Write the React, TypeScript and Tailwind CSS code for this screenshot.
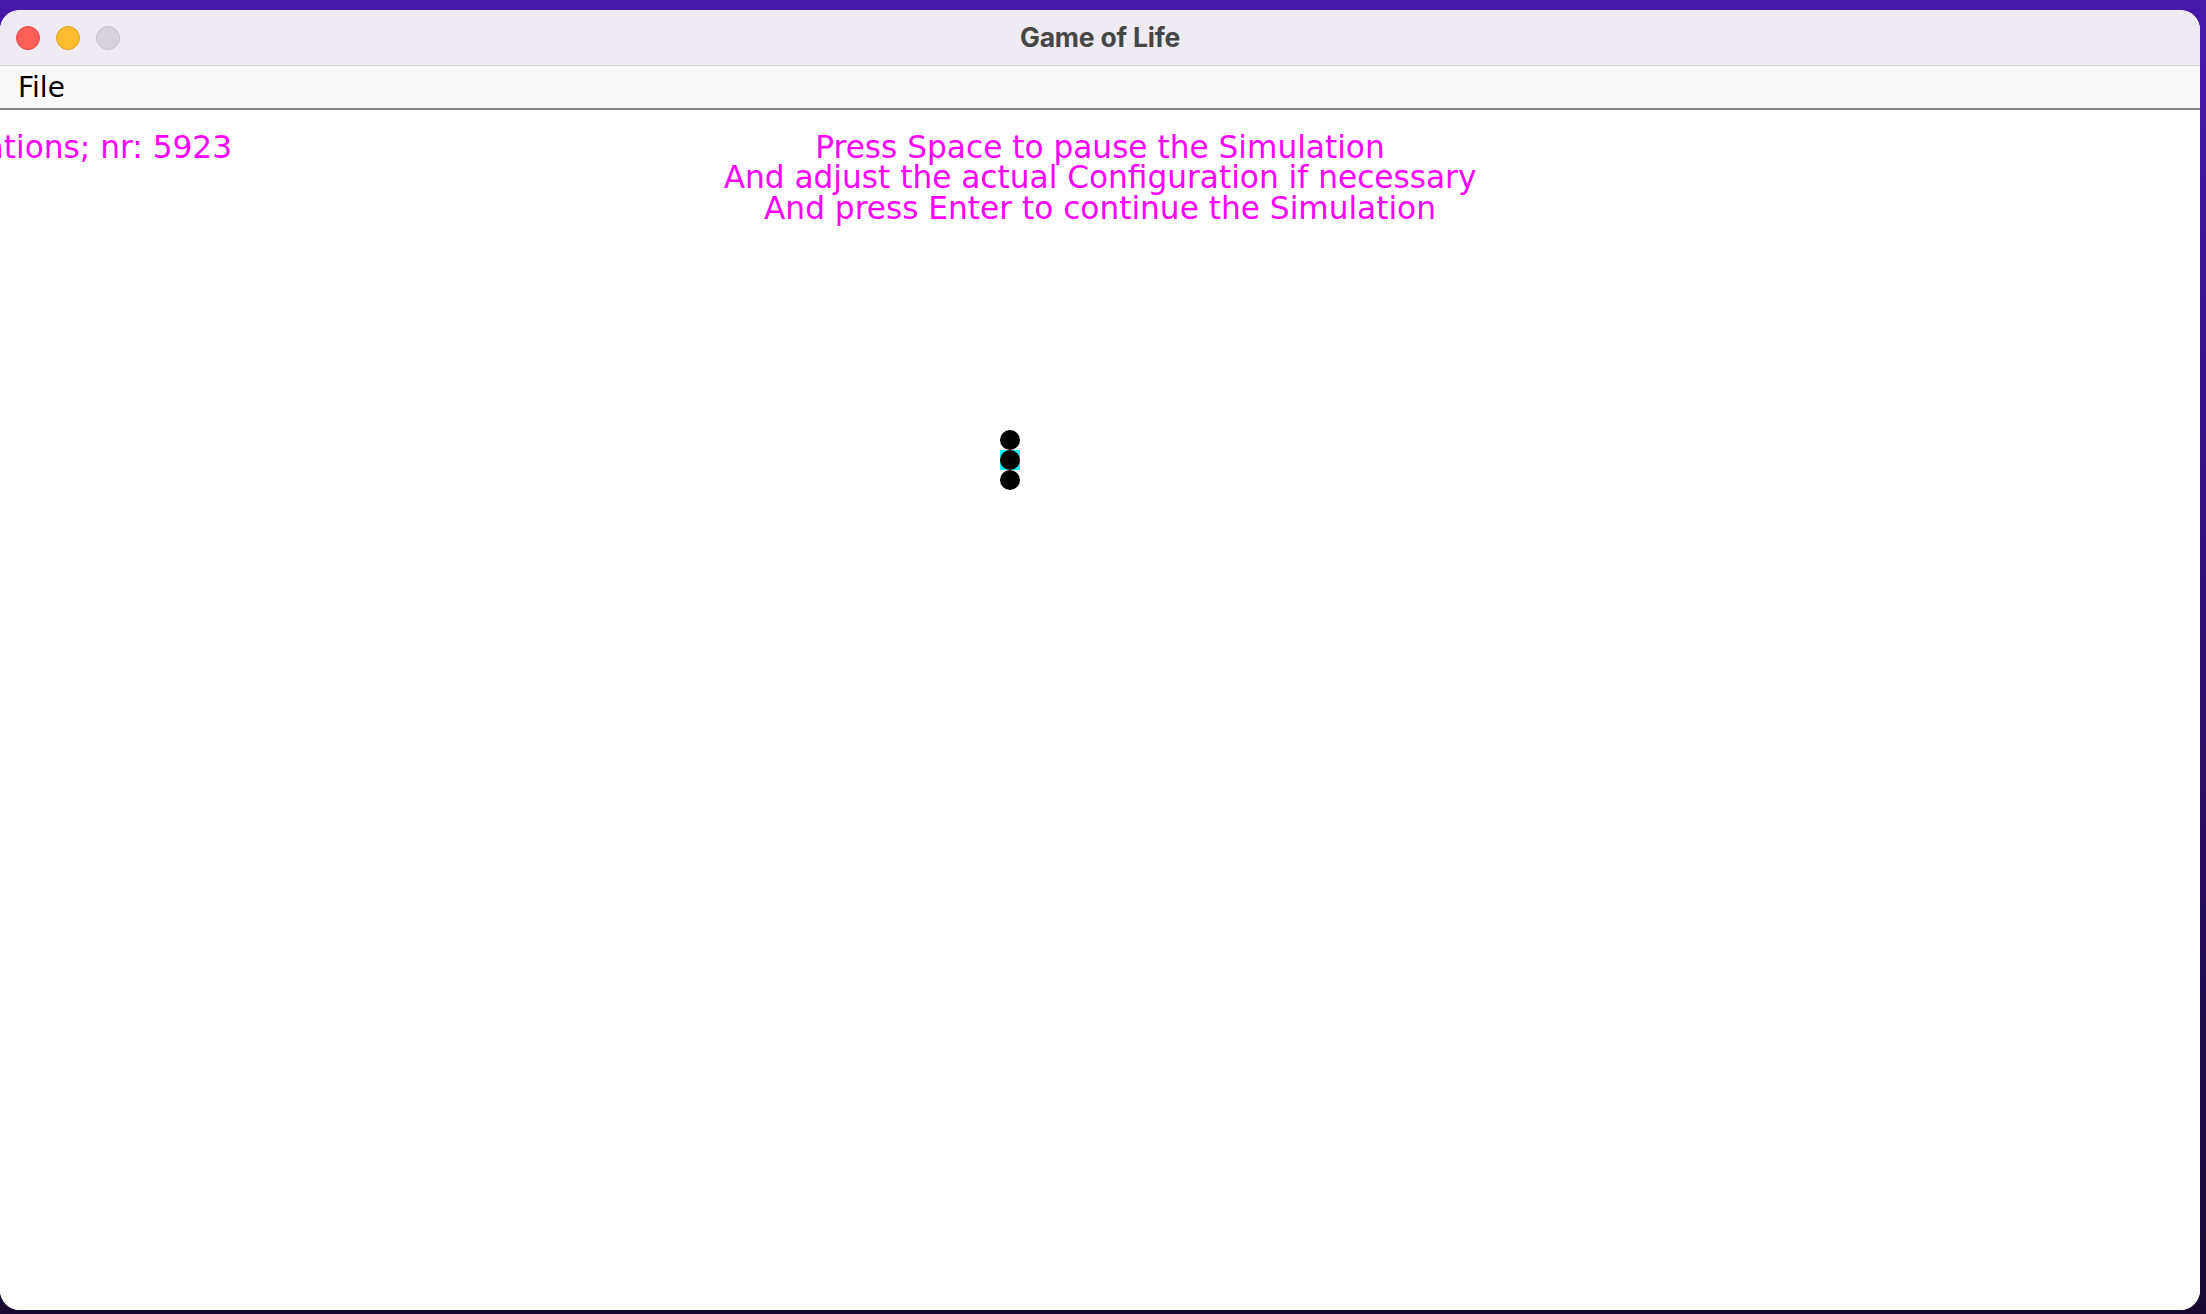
import React from "react";

const cells: { x: number; y: number; marked?: boolean }[] = [
  { x: 1000, y: 430 },
  { x: 1000, y: 450, marked: true },
  { x: 1000, y: 470 },
];

export default function App() {
  return (
    <div className="w-[2206px] h-[1314px] overflow-hidden bg-[linear-gradient(180deg,#4718ac_0%,#2e1278_45%,#160a32_100%)] pt-[10px] pr-[6px] pb-[4px] flex">
      <div className="flex-1 flex flex-col rounded-[20px] overflow-hidden bg-white">
        {/* Title bar */}
        <div className="h-[56px] shrink-0 bg-[#eeebf2] border-b border-[#d6d4d9] flex items-center relative">
          <div className="flex items-center gap-[16px] pl-[16px]">
            <span className="w-[24px] h-[24px] rounded-full bg-[#fe5f57] border border-[#e2463f]" />
            <span className="w-[24px] h-[24px] rounded-full bg-[#febc2e] border border-[#e0a123]" />
            <span className="w-[24px] h-[24px] rounded-full bg-[#d5d2d9] border border-[#c3c0c7]" />
          </div>
          <div className="absolute inset-0 flex items-center justify-center pointer-events-none">
            <span className="font-['Inter','Liberation_Sans',sans-serif] font-bold text-[26.5px] text-[#464646] tracking-[-0.2px]">
              Game of Life
            </span>
          </div>
        </div>
        {/* Menu bar */}
        <div className="h-[44px] shrink-0 bg-[#f9f9f9] border-b-2 border-[#8a8a8a] flex items-center pl-[18px] pt-[2px]">
          <span className="font-['DejaVu_Sans',sans-serif] text-[28px] text-black leading-none">File</span>
        </div>
        {/* Canvas */}
        <div className="flex-1 relative bg-white font-['DejaVu_Sans',sans-serif] text-[#ff00ff]">
          <div className="grid pt-[22px]">
            <div className="col-start-1 row-start-1 w-[232px] overflow-hidden flex justify-end">
              <span className="whitespace-nowrap text-[31.2px] leading-[30px]">Generations; nr: 5923</span>
            </div>
            <div className="col-start-1 row-start-1 flex flex-col items-center text-[31.2px] leading-[30.3px] whitespace-nowrap">
              <span>Press Space to pause the Simulation</span>
              <span>And adjust the actual Configuration if necessary</span>
              <span>And press Enter to continue the Simulation</span>
            </div>
          </div>
          {cells.map((c, i) => (
            <div
              key={i}
              className="absolute w-[20px] h-[20px]"
              style={{ left: c.x, top: c.y - 110 }}
            >
              {c.marked && <div className="absolute inset-0 bg-[#00ffff]" />}
              <div className="absolute inset-0 rounded-full bg-black" />
            </div>
          ))}
        </div>
      </div>
    </div>
  );
}
